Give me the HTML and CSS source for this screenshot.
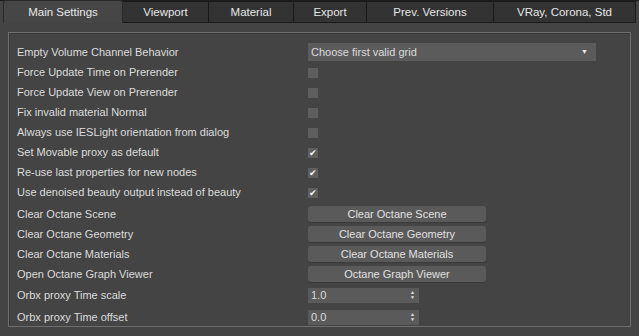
FILE: index.html
```html
<!DOCTYPE html>
<html lang="en">
<head>
    <meta charset="UTF-8">
    <title>Octane Settings</title>
    <link rel="stylesheet" href="styles.css">
</head>
<body>
    <!-- Tab bar -->
    <div class="tabs">
        <div class="tab active" style="width: 120px">Main Settings</div>
        <div class="tab" style="width: 86px">Viewport</div>
        <div class="tab" style="width: 85px">Material</div>
        <div class="tab" style="width: 73px">Export</div>
        <div class="tab" style="width: 127px">Prev. Versions</div>
        <div class="tab" style="width: 142px">VRay, Corona, Std</div>
    </div>

    <!-- Settings group -->
    <div class="panel">
        <div class="row">
            <span class="label">Empty Volume Channel Behavior</span>
            <div class="dropdown">Choose first valid grid <span class="arrow">&#9660;</span></div>
        </div>
        <div class="row">
            <span class="label">Force Update Time on Prerender</span>
            <span class="check"></span>
        </div>
        <div class="row">
            <span class="label">Force Update View on Prerender</span>
            <span class="check"></span>
        </div>
        <div class="row">
            <span class="label">Fix invalid material Normal</span>
            <span class="check"></span>
        </div>
        <div class="row">
            <span class="label">Always use IESLight orientation from dialog</span>
            <span class="check"></span>
        </div>
        <div class="row">
            <span class="label">Set Movable proxy as default</span>
            <span class="check checked">&#10004;</span>
        </div>
        <div class="row">
            <span class="label">Re-use last properties for new nodes</span>
            <span class="check checked">&#10004;</span>
        </div>
        <div class="row">
            <span class="label">Use denoised beauty output instead of beauty</span>
            <span class="check checked">&#10004;</span>
        </div>
        <div class="row row-btn row-btn-first">
            <span class="label">Clear Octane Scene</span>
            <button>Clear Octane Scene</button>
        </div>
        <div class="row row-btn">
            <span class="label">Clear Octane Geometry</span>
            <button>Clear Octane Geometry</button>
        </div>
        <div class="row row-btn">
            <span class="label">Clear Octane Materials</span>
            <button>Clear Octane Materials</button>
        </div>
        <div class="row row-btn">
            <span class="label">Open Octane Graph Viewer</span>
            <button>Octane Graph Viewer</button>
        </div>
        <div class="row row-spin">
            <span class="label">Orbx proxy Time scale</span>
            <div class="spinner">1.0 <span class="spin-arrows">&#9650;<br>&#9660;</span></div>
        </div>
        <div class="row row-spin">
            <span class="label">Orbx proxy Time offset</span>
            <div class="spinner">0.0 <span class="spin-arrows">&#9650;<br>&#9660;</span></div>
        </div>
    </div>
</body>
</html>
```

FILE: styles.css
```css
html, body {
    margin: 0;
    padding: 0;
    height: 100%;
    background: #444444; /* 3ds Max dark panel */
    color: #dcdcdc;
    font-family: "Liberation Sans", Arial, sans-serif;
    font-size: 11px;
    overflow: hidden;
}

/* Tab bar */
.tabs {
    display: flex;
    height: 22px;
    padding-left: 3px;
    background: #444444;
    border-top: 1px solid #1c1c1c;
}

.tab {
    box-sizing: border-box;
    height: 22px;
    line-height: 20px;
    text-align: center;
    background: #333333;
    border: 1px solid #1a1a1a;
    border-left: none;
    color: #e6e6e6;
    font-size: 11.5px;
}

.tab.active {
    background: #464646;
    border: 1px solid #2a2a2a;
    border-bottom: none;
    border-radius: 3px 3px 0 0;
    height: 23px;
    margin-top: -1px;
    line-height: 22px;
}

/* Group box */
.panel {
    margin: 9px 8px 0 8px;
    height: 295px;
    box-sizing: border-box;
    border: 1px solid #6e6e6e;
    box-shadow: inset 1px 1px 0 #383838;
    padding: 9px 0 0 8px;
}

.row {
    display: flex;
    align-items: center;
    height: 20px;
}

.label {
    width: 291px;
    flex-shrink: 0;
    white-space: nowrap;
}

.dropdown {
    position: relative;
    box-sizing: border-box;
    width: 288px;
    height: 18px;
    line-height: 18px;
    padding-left: 3px;
    background: #5b5b5b;
    color: #dcdcdc;
}

.dropdown .arrow {
    position: absolute;
    right: 8px;
    top: 0;
    font-size: 7px;
    color: #e8e8e8;
}

.check {
    width: 10px;
    height: 10px;
    margin-top: 2px;
    background: #5e5e5e;
    font-size: 9px;
    line-height: 10px;
    text-align: center;
    color: #f4f4f4;
}

/* Buttons */
.row-btn-first {
    margin-top: 2px;
}

button {
    box-sizing: border-box;
    width: 178px;
    height: 16px;
    padding: 0;
    border: none;
    border-radius: 3px;
    background: #5a5a5a;
    box-shadow: 0 1px 0 #3a3a3a;
    color: #e0e0e0;
    font-family: inherit;
    font-size: 11px;
    line-height: 16px;
}

/* Spinners */
.row-spin {
    height: 22px;
}

.spinner {
    position: relative;
    box-sizing: border-box;
    width: 111px;
    height: 15px;
    line-height: 15px;
    padding-left: 3px;
    background: #5a5a5a;
}

.spin-arrows {
    position: absolute;
    right: 4px;
    top: 2px;
    font-size: 5px;
    line-height: 5px;
    color: #e0e0e0;
}
```
